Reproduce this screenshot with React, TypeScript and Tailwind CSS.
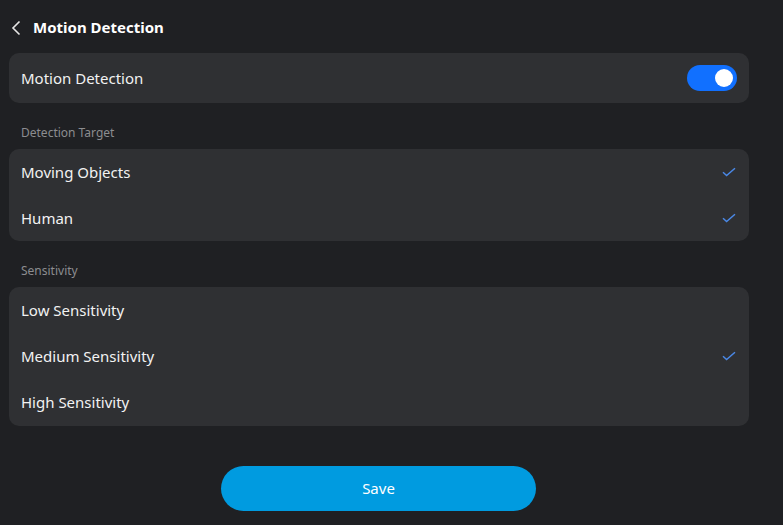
import { useState } from "react";

const targets = ["Moving Objects", "Human"];
const levels = ["Low Sensitivity", "Medium Sensitivity", "High Sensitivity"];

function Check() {
  return (
    <svg width="14" height="10" viewBox="0 0 14 10" fill="none" className="text-[#4a88e6]">
      <path d="M1 5.2L4.6 8.6L13 1.2" stroke="currentColor" strokeWidth="1.5" />
    </svg>
  );
}

function Row({ label, checked, onClick }: { label: string; checked: boolean; onClick: () => void }) {
  return (
    <button
      onClick={onClick}
      className="flex h-[46px] w-full items-center justify-between pl-3 pr-[13px] text-left text-[15px] text-[#f2f2f2]"
    >
      <span>{label}</span>
      {checked && <Check />}
    </button>
  );
}

export default function App() {
  const [enabled, setEnabled] = useState(true);
  const [picked, setPicked] = useState<string[]>(["Moving Objects", "Human"]);
  const [level, setLevel] = useState("Medium Sensitivity");

  const toggleTarget = (t: string) =>
    setPicked((p) => (p.includes(t) ? p.filter((x) => x !== t) : [...p, t]));

  return (
    <div className="min-h-[525px] bg-[#1f2023] px-[9px] font-['Noto_Sans','Open_Sans',sans-serif]">
      <div className="w-[740px]">
        {/* Header */}
        <div className="flex h-[53px] items-center gap-[10px] pl-[1px] pt-[2px]">
          <svg width="13" height="16" viewBox="0 0 13 16" fill="none" className="text-[#e6e6e6]">
            <path d="M9.5 1.5L3 8L9.5 14.5" stroke="currentColor" strokeWidth="1.6" />
          </svg>
          <h1 className="text-[15px] font-bold text-white">Motion Detection</h1>
        </div>

        {/* Main switch */}
        <div className="flex h-[50px] items-center justify-between rounded-[10px] bg-[#2f3033] pl-3 pr-3">
          <span className="text-[15px] text-[#f2f2f2]">Motion Detection</span>
          <button
            onClick={() => setEnabled(!enabled)}
            className={`flex h-[26px] w-[50px] items-center rounded-full px-1 ${
              enabled ? "justify-end bg-[#1170ff]" : "justify-start bg-[#55575c]"
            }`}
          >
            <span className="h-[18px] w-[18px] rounded-full bg-white" />
          </button>
        </div>

        <div className="flex h-[46px] items-end pb-[7px] pl-3 text-[12px] text-[#8c8d90]">
          Detection Target
        </div>
        <div className="rounded-[10px] bg-[#2f3033]">
          {targets.map((t) => (
            <Row key={t} label={t} checked={picked.includes(t)} onClick={() => toggleTarget(t)} />
          ))}
        </div>

        <div className="flex h-[46px] items-end pb-[7px] pl-3 text-[12px] text-[#8c8d90]">
          Sensitivity
        </div>
        <div className="rounded-[10px] bg-[#2f3033] pb-[1px]">
          {levels.map((l) => (
            <Row key={l} label={l} checked={level === l} onClick={() => setLevel(l)} />
          ))}
        </div>

        <div className="flex pl-[212px] pt-10">
          <button className="h-[45px] w-[315px] rounded-full bg-[#009be0] text-[15px] text-white">
            Save
          </button>
        </div>
      </div>
    </div>
  );
}
